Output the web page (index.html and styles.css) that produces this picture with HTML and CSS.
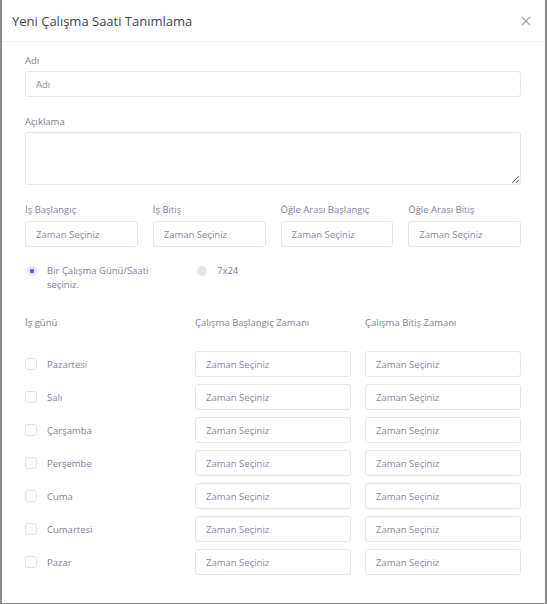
FILE: index.html
```html
<!DOCTYPE html>
<html lang="tr">

<head>
    <meta charset="UTF-8">
    <title>Yeni Çalışma Saati Tanımlama</title>

    <link rel="stylesheet" href="styles.css">
</head>

<body>
    <div class="modal">
        <header class="modal-header">
            <h2>Yeni Çalışma Saati Tanımlama</h2>
            <button class="close" type="button">
                <svg width="10" height="10" viewBox="0 0 10 10">
                    <path d="M1 1L9 9M9 1L1 9" stroke="#a1a5b7" stroke-width="1.1" fill="none" />
                </svg>
            </button>
        </header>

        <form class="modal-body">
            <div class="field">
                <label>Adı</label>
                <input type="text" placeholder="Adı">
            </div>

            <div class="field">
                <label>Açıklama</label>
                <textarea></textarea>
            </div>

            <div class="saatler">
                <div class="field">
                    <label>İş Başlangıç</label>
                    <input type="text" placeholder="Zaman Seçiniz">
                </div>
                <div class="field">
                    <label>İş Bitiş</label>
                    <input type="text" placeholder="Zaman Seçiniz">
                </div>
                <div class="field">
                    <label>Öğle Arası Başlangıç</label>
                    <input type="text" placeholder="Zaman Seçiniz">
                </div>
                <div class="field">
                    <label>Öğle Arası Bitiş</label>
                    <input type="text" placeholder="Zaman Seçiniz">
                </div>
            </div>

            <div class="secim">
                <label class="radio">
                    <span class="nokta valgt"></span>
                    <span class="radio-tekst">Bir Çalışma Günü/Saati seçiniz.</span>
                </label>
                <label class="radio">
                    <span class="nokta"></span>
                    <span class="radio-tekst">7x24</span>
                </label>
            </div>

            <div class="gunler">
                <div class="kolon">İş günü</div>
                <div class="kolon">Çalışma Başlangıç Zamanı</div>
                <div class="kolon">Çalışma Bitiş Zamanı</div>
            </div>

            <div class="gun-listesi"></div>

            <template>
                <div class="gun">
                    <label class="check"><span class="kutu"></span><span class="gun-adi"></span></label>
                    <input type="text" placeholder="Zaman Seçiniz">
                    <input type="text" placeholder="Zaman Seçiniz">
                </div>
            </template>
        </form>
    </div>

    <script>
        const gunler = ["Pazartesi", "Salı", "Çarşamba", "Perşembe", "Cuma", "Cumartesi", "Pazar"];

        const container = document.querySelector(".gun-listesi");
        const temp = document.querySelector("template");

        gunler.forEach((gun) => {
            const klon = temp.cloneNode(true).content;
            klon.querySelector(".gun-adi").textContent = gun;
            container.appendChild(klon);
        });
    </script>

</body></html>
```

FILE: styles.css
```css
body {
    margin: 0;
    font-family: "Open Sans", "Noto Sans", sans-serif;
    background: #ffffff;
}

.modal {
    box-sizing: border-box;
    height: 604px;
    border-left: 2px solid #8c8c8c;
    border-right: 2px solid #8c8c8c;
    border-bottom: 1px solid #8c8c8c;
    background: #ffffff;
}

.modal-header {
    display: flex;
    align-items: center;
    justify-content: space-between;
    height: 41px;
    padding: 0 14px 0 10px;
    border-bottom: 1px solid #eff2f5;
}

.modal-header h2 {
    margin: 0;
    font-size: 13px;
    font-weight: 500;
    color: #3f4254;
}

.close {
    border: 0;
    background: none;
    padding: 0;
    display: flex;
}

.modal-body {
    padding: 12px 24px 0 23px;
}

.field label,
.kolon {
    display: block;
    font-size: 9.5px;
    line-height: 14px;
    color: #7e8299;
    margin-bottom: 3px;
}

.field {
    margin-bottom: 18px;
}

input,
textarea {
    box-sizing: border-box;
    display: block;
    width: 100%;
    height: 26px;
    padding: 0 10px;
    border: 1px solid #e4e6ef;
    border-radius: 3px;
    font-family: inherit;
    font-size: 9.5px;
    color: #5e6278;
    background: #ffffff;
    outline: none;
}

input::placeholder {
    color: #868aa3;
}

textarea {
    height: 53px;
    resize: vertical;
}

.saatler {
    display: grid;
    grid-template-columns: repeat(4, 1fr);
    gap: 15px;
}

.saatler .field {
    margin-bottom: 17px;
}

.saatler label {
    margin-bottom: 4px;
}

.secim {
    display: grid;
    grid-template-columns: repeat(3, 1fr);
    gap: 14px;
}

.radio {
    display: flex;
    align-items: flex-start;
    gap: 10px;
    padding-left: 2px;
    font-size: 9.5px;
    line-height: 14px;
    color: #7e8299;
}

.radio-tekst {
    max-width: 110px;
}

.nokta {
    flex: none;
    display: flex;
    align-items: center;
    justify-content: center;
    width: 10px;
    height: 10px;
    margin-top: 2px;
    border-radius: 50%;
    background: #e4e6ef;
}

.nokta.valgt::after {
    content: "";
    width: 4px;
    height: 4px;
    border-radius: 1px;
    background: #4f63f0;
}

.gunler {
    display: grid;
    grid-template-columns: repeat(3, 1fr);
    gap: 14px;
    margin-top: 24px;
    margin-bottom: 18px;
}

.gun-listesi {
    display: grid;
    gap: 7px;
}

.gun {
    display: grid;
    grid-template-columns: repeat(3, 1fr);
    gap: 14px;
    align-items: center;
}

.check {
    display: flex;
    align-items: center;
    gap: 10px;
    font-size: 9.5px;
    color: #7e8299;
}

.kutu {
    box-sizing: border-box;
    width: 12px;
    height: 12px;
    border: 1px solid #e1e3ea;
    border-radius: 3px;
}
```
